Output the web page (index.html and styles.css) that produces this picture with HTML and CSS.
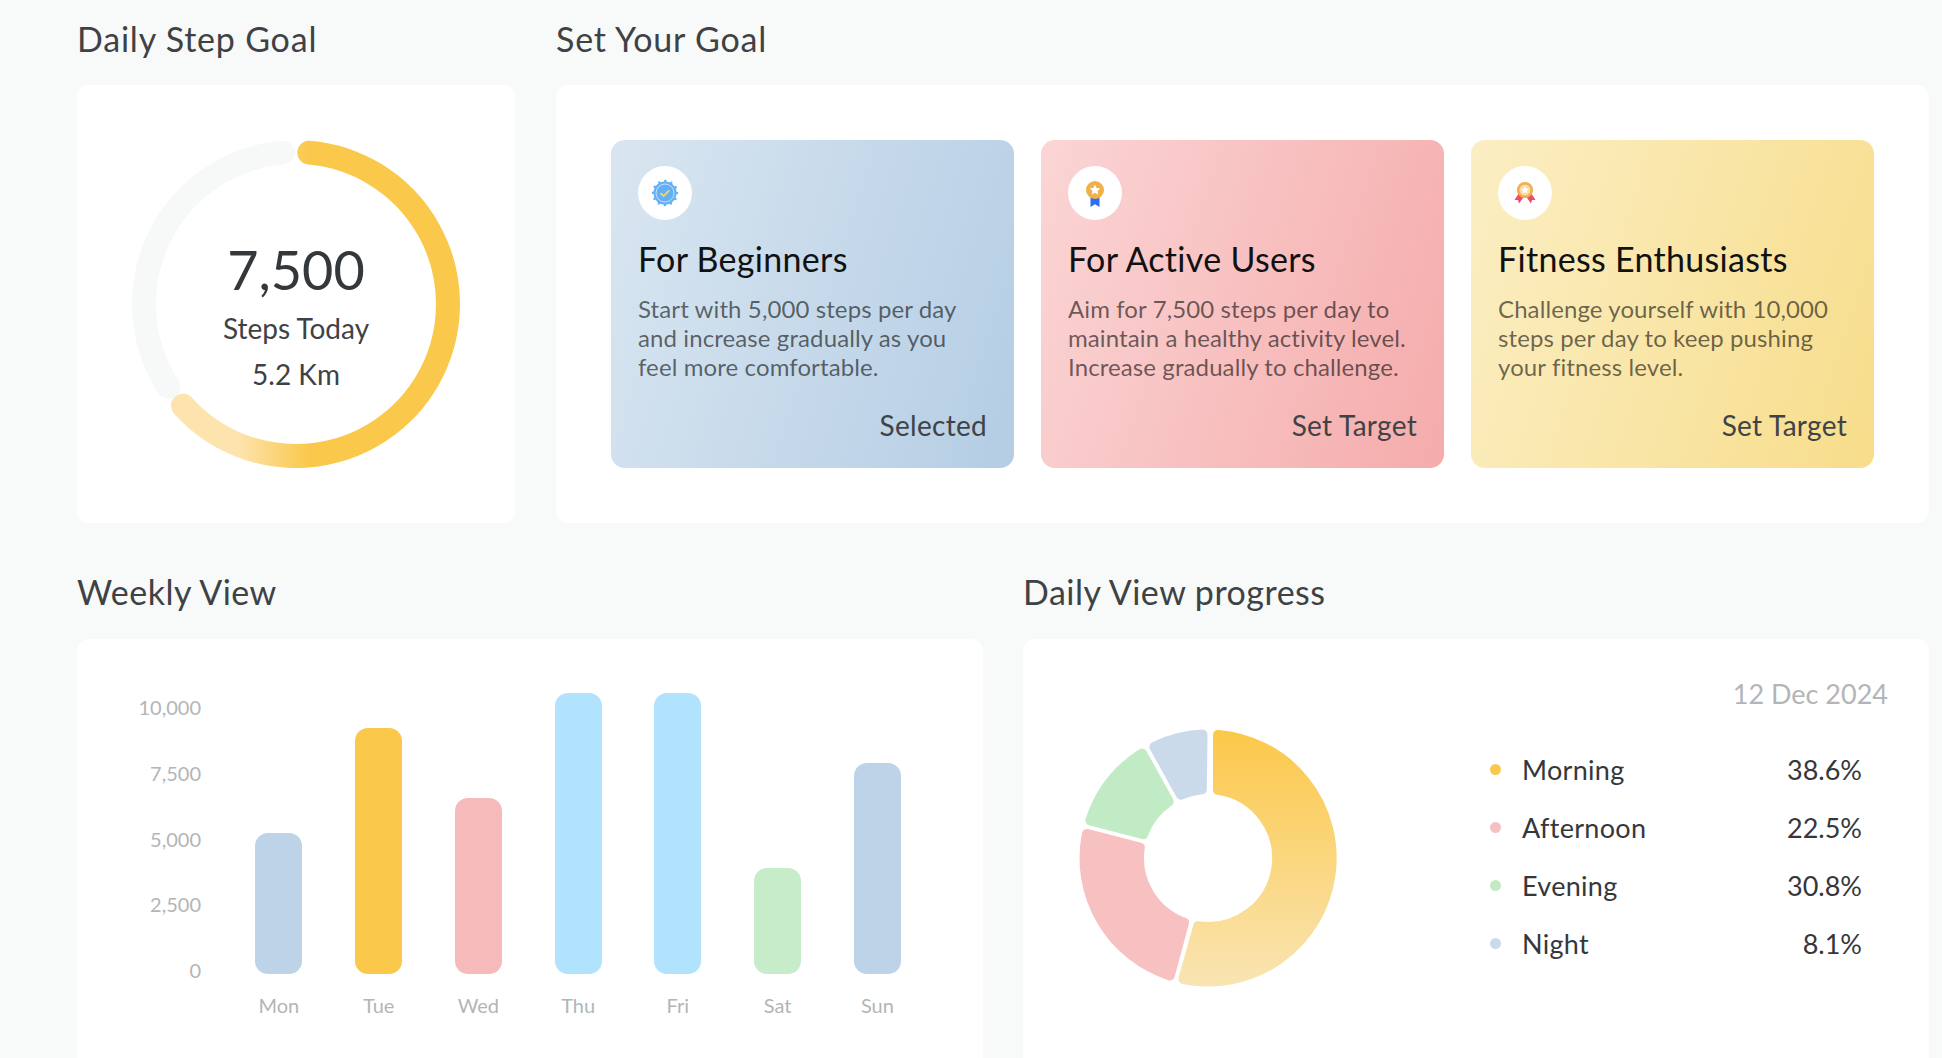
FILE: index.html
```html
<!DOCTYPE html>
<html lang="en">
<head>
<meta charset="UTF-8">
<meta name="viewport" content="width=device-width, initial-scale=1.0">
<title>Step Goals</title>
<link rel="stylesheet" href="styles.css">
</head>
<body>

<div class="row row-top">
    <section>
        <h2>Daily Step Goal</h2>
        <div class="card ring-card">
            <div class="ring">
                <svg viewBox="0 0 328 328" width="328" height="328">
                    <defs>
                        <linearGradient id="ringFill" gradientUnits="userSpaceOnUse" x1="107" y1="0" x2="177" y2="0">
                            <stop offset="0" stop-color="#fde3ae"/>
                            <stop offset="1" stop-color="#fac84b"/>
                        </linearGradient>
                    </defs>
                    <path d="M36.5 246.8A152 152 0 0 1 150.8 12.6" fill="none" stroke="#f7f9f8" stroke-width="24" stroke-linecap="round"/>
                    <path d="M177.2 12.6A152 152 0 1 1 51 265.7" fill="none" stroke="url(#ringFill)" stroke-width="24" stroke-linecap="round"/>
                </svg>
                <div class="ring-text">
                    <div class="ring-num">7,500</div>
                    <div class="ring-label">Steps Today</div>
                    <div class="ring-label ring-km">5.2 Km</div>
                </div>
            </div>
        </div>
    </section>

    <section>
        <h2>Set Your Goal</h2>
        <div class="card goals">
            <div class="goal goal-blue">
                <div class="goal-icon">
                    <svg viewBox="0 0 32 32" width="32" height="32">
                        <circle cx="16" cy="16" r="11.5" fill="#63b0f4"/>
                        <circle cx="16" cy="16" r="12" fill="none" stroke="#63b0f4" stroke-width="2.6" stroke-linecap="round" stroke-dasharray="0 6.28"/>
                        <circle cx="16" cy="16" r="9" fill="none" stroke="#c4e1fb" stroke-width="1"/>
                        <path d="M11.5 16.2l3.2 2.8 5.6-5.6" fill="none" stroke="#f3d27a" stroke-width="1.8"/>
                    </svg>
                </div>
                <h3>For Beginners</h3>
                <p>Start with 5,000 steps per day<br>and increase gradually as you<br>feel more comfortable.</p>
                <div class="goal-action">Selected</div>
            </div>
            <div class="goal goal-pink">
                <div class="goal-icon">
                    <svg viewBox="0 0 32 32" width="32" height="32">
                        <path d="M11.500 17h9v13l-4.500-2.800-4.500 2.800z" fill="#2f6cf0"/>
                        <circle cx="16" cy="13" r="9" fill="#f2b04a"/>
                        <polygon points="16,7.500 17.600,11 21.300,11.400 18.500,13.900 19.300,17.600 16,15.700 12.700,17.600 13.500,13.900 10.700,11.400 14.400,11" fill="#fff"/>
                    </svg>
                </div>
                <h3>For Active Users</h3>
                <p>Aim for 7,500 steps per day to<br>maintain a healthy activity level.<br>Increase gradually to challenge.</p>
                <div class="goal-action">Set Target</div>
            </div>
            <div class="goal goal-yellow">
                <div class="goal-icon">
                    <svg viewBox="0 0 32 32" width="32" height="32">
                        <path d="M10 16l-4.500 7 3.500 0 1 3.500 5-7z" fill="#ee4a6b"/>
                        <path d="M22 16l4.500 7-3.500 0-1 3.500-5-7z" fill="#ee4a6b"/>
                        <circle cx="16" cy="13" r="6.800" fill="#f9dca8" stroke="#f2b04a" stroke-width="2.600"/>
                        <polygon points="16,8.800 17.200,11.500 20,11.800 17.900,13.700 18.500,16.500 16,15.100 13.500,16.500 14.100,13.700 12,11.800 14.800,11.500" fill="#fff"/>
                    </svg>
                </div>
                <h3>Fitness Enthusiasts</h3>
                <p>Challenge yourself with 10,000<br>steps per day to keep pushing<br>your fitness level.</p>
                <div class="goal-action">Set Target</div>
            </div>
        </div>
    </section>
</div>

<div class="row row-bottom">
    <section>
        <h2>Weekly View</h2>
        <div class="card week">
            <div class="y-axis">
                <span>10,000</span>
                <span>7,500</span>
                <span>5,000</span>
                <span>2,500</span>
                <span>0</span>
            </div>
            <div class="plot">
                <div class="col"><div class="bars"><div class="bar bar-blue" style="height: 141px"></div></div><span>Mon</span></div>
                <div class="col"><div class="bars"><div class="bar bar-yellow" style="height: 246px"></div></div><span>Tue</span></div>
                <div class="col"><div class="bars"><div class="bar bar-pink" style="height: 176px"></div></div><span>Wed</span></div>
                <div class="col"><div class="bars"><div class="bar bar-sky" style="height: 281px"></div></div><span>Thu</span></div>
                <div class="col"><div class="bars"><div class="bar bar-sky" style="height: 281px"></div></div><span>Fri</span></div>
                <div class="col"><div class="bars"><div class="bar bar-green" style="height: 106px"></div></div><span>Sat</span></div>
                <div class="col"><div class="bars"><div class="bar bar-blue" style="height: 211px"></div></div><span>Sun</span></div>
            </div>
        </div>
    </section>

    <section>
        <h2>Daily View progress</h2>
        <div class="card day">
            <div class="day-date">12 Dec 2024</div>
            <div class="day-body">
                <svg class="donut" viewBox="-130 -130 260 260" width="260" height="260">
                    <defs>
                        <linearGradient id="morning" gradientUnits="userSpaceOnUse" x1="0" y1="-128" x2="0" y2="128">
                            <stop offset="0" stop-color="#fcc84a"/>
                            <stop offset="1" stop-color="#f9e4b2"/>
                        </linearGradient>
                    </defs>
                    <path class="slice" fill="url(#morning)" stroke="url(#morning)" d="M10 -123.1A123.5 123.5 0 1 1 -24.6 121L-9.84 68.3A69 69 0 1 0 10 -68.3Z"/>
                    <path class="slice" fill="#f8c1c1" stroke="#f8c1c1" d="M-38.16 117.45A123.5 123.5 0 0 1 -121.1 -24.1L-68.2 -10.44A69 69 0 0 0 -23.94 64.7Z"/>
                    <path class="slice" fill="#c1ebc5" stroke="#c1ebc5" d="M-117.6 -37.65A123.5 123.5 0 0 1 -65.9 -104.44L-39.38 -56.66A69 69 0 0 0 -64.7 -23.94Z"/>
                    <path class="slice" fill="#cadaeb" stroke="#cadaeb" d="M-53.65 -111.24A123.5 123.5 0 0 1 -5.49 -123.38L-6.16 -68.72A69 69 0 0 0 -27.2 -63.4Z"/>
                </svg>
                <ul class="legend">
                    <li><i class="dot dot-yellow"></i><span class="legend-name">Morning</span><span>38.6%</span></li>
                    <li><i class="dot dot-pink"></i><span class="legend-name">Afternoon</span><span>22.5%</span></li>
                    <li><i class="dot dot-green"></i><span class="legend-name">Evening</span><span>30.8%</span></li>
                    <li><i class="dot dot-blue"></i><span class="legend-name">Night</span><span>8.1%</span></li>
                </ul>
            </div>
        </div>
    </section>
</div>

</body>
</html>
```

FILE: styles.css
```css
html, body {
    height: 100%;
    overflow: hidden;
}

body {
    font-family: Lato, "Open Sans", sans-serif;
    background-color: #f8faf9;
    color: #3f4245;
    margin: 0;
    padding: 21px 13px 0 77px;
    box-sizing: border-box;
}

.row {
    display: grid;
    column-gap: 40px;
}

.row-top {
    grid-template-columns: 438px 1fr;
    column-gap: 41px;
    margin-bottom: 51px;
}

.row-bottom {
    grid-template-columns: 1fr 1fr;
}

h2 {
    font-size: 34px;
    font-weight: 400;
    letter-spacing: 0.8px;
    line-height: 36px;
    margin: 0 0 28px 0;
}

.row-bottom h2 {
    letter-spacing: 0.5px;
    margin-bottom: 29px;
}

.card {
    background-color: #fff;
    border-radius: 12px;
}

/* ring */
.ring-card {
    padding: 55px;
}

.ring {
    position: relative;
    width: 328px;
    height: 328px;
}

.ring svg {
    display: block;
}

.ring-text {
    position: absolute;
    top: 0;
    left: 0;
    right: 0;
    bottom: 0;
    display: flex;
    flex-direction: column;
    align-items: center;
    padding-top: 96px;
    box-sizing: border-box;
}

.ring-num {
    font-size: 54px;
    line-height: 68px;
    color: #35383b;
}

.ring-label {
    font-size: 28px;
    line-height: 32px;
    margin-top: 8px;
}

.ring-km {
    margin-top: 14px;
}

/* goals */
.goals {
    display: grid;
    grid-template-columns: repeat(3, 1fr);
    column-gap: 27px;
    padding: 55px;
}

.goal {
    height: 328px;
    box-sizing: border-box;
    border-radius: 14px;
    padding: 26px 27px 27px;
    display: flex;
    flex-direction: column;
}

.goal-blue {
    background: linear-gradient(108deg, #d9e6f1, #b4cde4);
}

.goal-pink {
    background: linear-gradient(108deg, #fbd5d5, #f5abab);
}

.goal-yellow {
    background: linear-gradient(108deg, #fbeec3, #f7dd8b);
}

.goal-icon {
    width: 54px;
    height: 54px;
    border-radius: 50%;
    background-color: #fff;
    display: flex;
    align-items: center;
    justify-content: center;
    margin-bottom: 20px;
}

.goal h3 {
    font-size: 34px;
    font-weight: 400;
    letter-spacing: 0.3px;
    line-height: 38px;
    color: #111;
    margin: 0 0 16px 0;
}

.goal p {
    font-size: 24px;
    letter-spacing: 0.1px;
    line-height: 29px;
    color: rgba(0, 0, 0, 0.58);
    margin: 0;
    white-space: nowrap;
}

.goal-action {
    margin-top: auto;
    text-align: right;
    font-size: 28px;
    letter-spacing: 0.3px;
    line-height: 32px;
    color: #404346;
}

/* weekly chart */
.week {
    display: flex;
    padding: 53px 0 0 55px;
    min-height: 450px;
    box-sizing: border-box;
}

.y-axis {
    width: 69px;
    height: 287px;
    margin-top: 3px;
    margin-right: 28px;
    display: flex;
    flex-direction: column;
    justify-content: space-between;
    text-align: right;
    font-size: 20px;
    line-height: 24px;
    color: #b3b5b6;
}

.plot {
    display: flex;
}

.col {
    width: 99.75px;
    display: flex;
    flex-direction: column;
    align-items: center;
    font-size: 20px;
    line-height: 24px;
    color: #b3b5b6;
}

.bars {
    height: 282px;
    display: flex;
    align-items: flex-end;
    margin-bottom: 19px;
}

.bar {
    width: 47px;
    border-radius: 13px;
}

.bar-blue {
    background-color: #bdd3e8;
}

.bar-yellow {
    background-color: #fac84b;
}

.bar-pink {
    background-color: #f7baba;
}

.bar-sky {
    background-color: #b1e3fe;
}

.bar-green {
    background-color: #c6ecca;
}

/* daily donut */
.day {
    padding: 39px 41px 0 55px;
    min-height: 450px;
    box-sizing: border-box;
}

.day-date {
    text-align: right;
    font-size: 27px;
    line-height: 32px;
    color: #b3b5b6;
}

.day-body {
    display: flex;
    justify-content: space-between;
    margin-top: 18px;
}

.donut {
    display: block;
}

.slice {
    stroke-width: 10;
    stroke-linejoin: round;
}

.legend {
    list-style-type: none;
    width: 372px;
    padding: 0;
    margin: 12px 26px 0 0;
    font-size: 27px;
    color: #35383b;
}

.legend li {
    display: flex;
    align-items: center;
    height: 58px;
}

.legend-name {
    flex: 1;
    letter-spacing: 0.3px;
}

.dot {
    width: 11px;
    height: 11px;
    border-radius: 50%;
    margin-right: 21px;
}

.dot-yellow {
    background-color: #fac84b;
}

.dot-pink {
    background-color: #f8c1c1;
}

.dot-green {
    background-color: #c1ebc5;
}

.dot-blue {
    background-color: #cadaeb;
}
```
